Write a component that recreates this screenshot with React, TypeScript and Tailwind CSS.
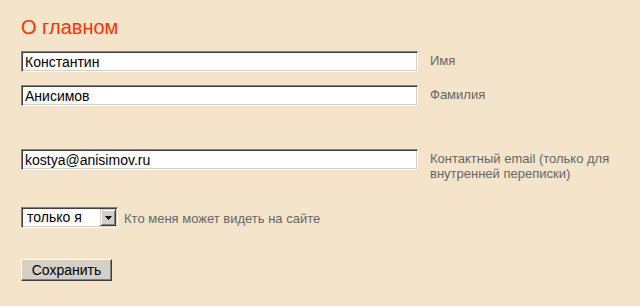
import React from "react";

const inset =
  "border border-t-[#808080] border-l-[#808080] border-b-white border-r-white shadow-[inset_1px_1px_0_#404040,inset_-1px_-1px_0_#d4d0c8] bg-white";

function Field({ value, label, mt }: { value: string; label: React.ReactNode; mt: string }) {
  return (
    <div className={`flex items-start ${mt}`}>
      <input
        type="text"
        defaultValue={value}
        className={`${inset} w-[397px] h-[21px] px-[3px] text-[14px] leading-[17px] text-black outline-none font-['Liberation_Sans',Arial,sans-serif]`}
      />
      <div className="ml-[12px] pt-[2px] text-[13px] leading-[15px] text-[#666666]">{label}</div>
    </div>
  );
}

export default function App() {
  return (
    <div className="w-[640px] h-[306px] bg-[#f3e4ca] pl-[21px] pt-[16px] font-['Liberation_Sans',Arial,sans-serif] overflow-hidden">
      <h1 className="text-[20px] leading-[23px] text-[#ff3300] font-normal">О главном</h1>

      <Field value="Константин" label="Имя" mt="mt-[12px]" />
      <Field value="Анисимов" label="Фамилия" mt="mt-[13px]" />
      <Field
        value="kostya@anisimov.ru"
        label={
          <>
            Контактный email (только для
            <br />
            внутренней переписки)
          </>
        }
        mt="mt-[43px]"
      />

      <div className="flex items-center mt-[26px]">
        <div className={`${inset} w-[97px] h-[21px] flex items-center justify-between pl-[5px] pr-[1px]`}>
          <span className="text-[14px] leading-[17px] text-black">только я</span>
          <div className="w-[16px] h-[17px] bg-[#d4d0c8] border border-t-[#d4d0c8] border-l-[#d4d0c8] border-b-[#404040] border-r-[#404040] shadow-[inset_1px_1px_0_#ffffff,inset_-1px_-1px_0_#808080] flex items-center justify-center">
            <svg width="7" height="4" viewBox="0 0 7 4">
              <path d="M0 0H7L3.5 4Z" fill="#000" />
            </svg>
          </div>
        </div>
        <span className="ml-[6px] text-[13px] leading-[15px] text-[#666666] pt-[1px]">Кто меня может видеть на сайте</span>
      </div>

      <button
        type="button"
        className="mt-[31px] w-[91px] h-[22px] bg-[#d4d0c8] border border-t-white border-l-white border-b-[#404040] border-r-[#404040] shadow-[inset_-1px_-1px_0_#808080] text-[14px] leading-[17px] text-black flex items-center justify-center"
      >
        Сохранить
      </button>
    </div>
  );
}
